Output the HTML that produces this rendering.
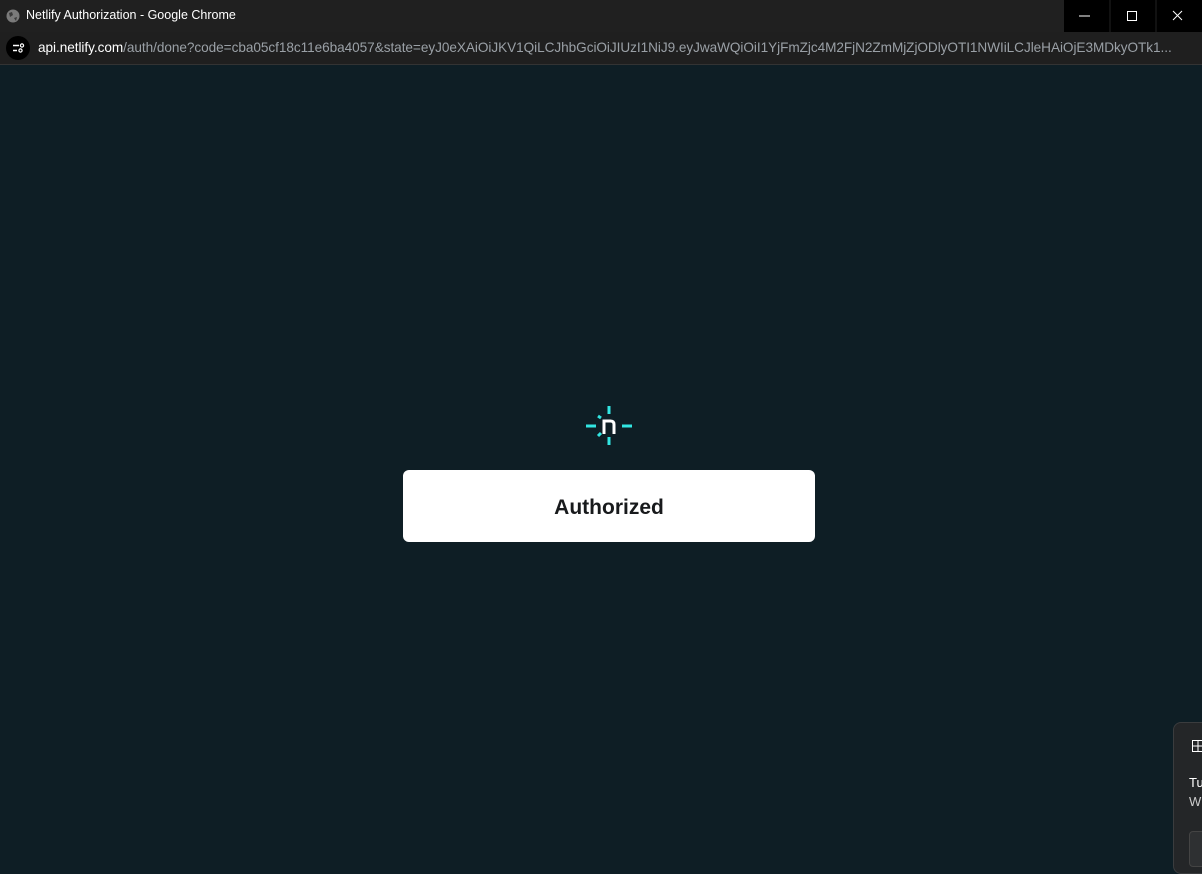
<!DOCTYPE html>
<html><head><style>
body{margin:0;width:1202px;height:866px;background:#0e1e25;font-family:"Liberation Sans",sans-serif;position:relative;overflow:hidden}
.tb{position:absolute;left:0;top:0;width:1202px;height:32px;background:#202020}
.tb .t{position:absolute;left:26px;top:8px;font-size:12.5px;color:#fff}
.btns{position:absolute;right:0;top:0;width:138px;height:32px;background:#000}
.ub{position:absolute;left:0;top:32px;width:1202px;height:32px;background:#1f1f1f;border-bottom:1px solid #333}
.url{position:absolute;left:38px;top:8px;font-size:13.6px;color:#9aa0a6;white-space:nowrap;letter-spacing:-0.05px}
.url b{color:#fff;font-weight:normal}
.card{position:absolute;left:403px;top:470px;width:412px;height:72px;background:#fff;border-radius:6px;text-align:center;line-height:76px;font-size:21px;font-weight:bold;color:#181a1c}
.toast{position:absolute;left:1173px;top:722px;width:40px;height:150px;background:#242628;border:1px solid #3a3c3e;border-radius:8px}
</style></head><body>
<div class="tb">
<svg style="position:absolute;left:6px;top:9px" width="14" height="14"><circle cx="7" cy="7" r="6.5" fill="#7a7a7a"/><path d="M3 4 L6 3 L7 6 L4 8 Z M8 9 L11 8 L10 12 Z" fill="#3a3a3a"/></svg>
<div class="t">Netlify Authorization - Google Chrome</div>
<div class="btns">
<svg width="138" height="32"><line x1="15" y1="16" x2="26" y2="16" stroke="#fff"/><line x1="46" y1="0" x2="46" y2="32" stroke="#222"/><rect x="63.5" y="11.5" width="9" height="9" fill="none" stroke="#fff"/><line x1="92" y1="0" x2="92" y2="32" stroke="#222"/><path d="M109 11 L118 20 M118 11 L109 20" stroke="#fff"/></svg>
</div></div>
<div class="ub">
<svg style="position:absolute;left:6px;top:4px" width="24" height="24"><circle cx="12" cy="12" r="12" fill="#000"/><path d="M7 9.5h6M7 14.5h4" stroke="#fff" stroke-width="1.4"/><circle cx="16" cy="9.5" r="1.6" fill="none" stroke="#fff" stroke-width="1.2"/><circle cx="14.5" cy="14.5" r="1.6" fill="none" stroke="#fff" stroke-width="1.2"/></svg>
<div class="url"><b>api.netlify.com</b>/auth/done?code=cba05cf18c11e6ba4057&amp;state=eyJ0eXAiOiJKV1QiLCJhbGciOiJIUzI1NiJ9.eyJwaWQiOiI1YjFmZjc4M2FjN2ZmMjZjODlyOTI1NWIiLCJleHAiOjE3MDkyOTk1...</div>
</div>
<svg style="position:absolute;left:585px;top:405px" width="48" height="42">
<g stroke="#32e6e2" stroke-width="3"><line x1="24" y1="1" x2="24" y2="9"/><line x1="24" y1="32" x2="24" y2="40"/><line x1="1" y1="21" x2="11" y2="21"/><line x1="37" y1="21" x2="47" y2="21"/><line x1="13" y1="11" x2="16" y2="13"/><line x1="13" y1="31" x2="16" y2="28"/></g>
<path d="M19 29 V16 H25.5 Q29 16 29 19.5 V29" fill="none" stroke="#fff" stroke-width="3"/>
</svg>
<div class="card">Authorized</div>
<div class="toast">
<svg style="position:absolute;left:18px;top:17px" width="12" height="12"><rect x="0.5" y="0.5" width="11" height="11" fill="none" stroke="#fff"/><path d="M0 6h12M6 0v12" stroke="#fff"/></svg>
<div style="position:absolute;left:15px;top:52px;color:#fff;font-size:13px">Tu</div>
<div style="position:absolute;left:15px;top:71px;color:#ccc;font-size:13px">W</div>
<div style="position:absolute;left:15px;top:108px;width:40px;height:34px;background:#2e3032;border:1px solid #444;border-radius:4px"></div>
</div>
</body></html>
